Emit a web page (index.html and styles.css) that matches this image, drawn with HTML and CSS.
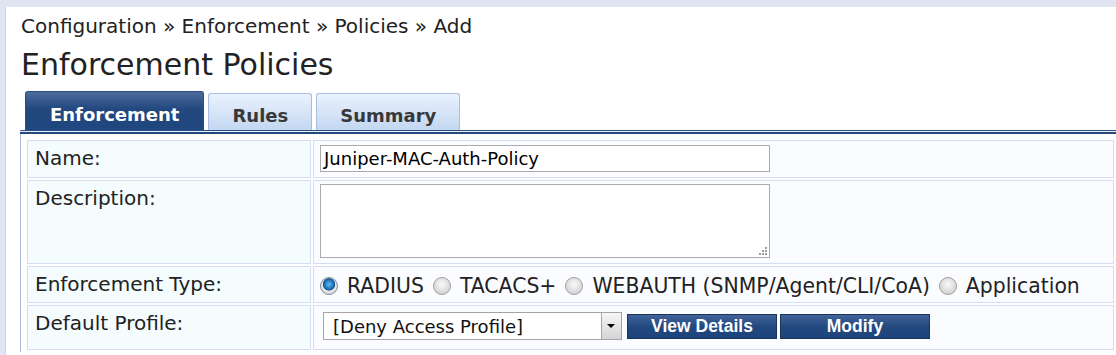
FILE: index.html
```html
<!DOCTYPE html>
<html lang="en">
<head>
  <meta charset="UTF-8" />
  <title>Enforcement Policies</title>
  <link rel="stylesheet" href="styles.css">
</head>
<body>
  <div class="page">
    <div class="crumbs">Configuration &raquo; Enforcement &raquo; Policies &raquo; Add</div>
    <h1>Enforcement Policies</h1>

    <div class="tabs">
      <div class="tab active">Enforcement</div>
      <div class="tab">Rules</div>
      <div class="tab">Summary</div>
    </div>

    <div class="panel">
      <table class="form">
        <tr class="name">
          <td class="label">Name:</td>
          <td class="value"><div class="input">Juniper-MAC-Auth-Policy</div></td>
        </tr>
        <tr class="desc">
          <td class="label">Description:</td>
          <td class="value">
            <div class="textarea">
              <svg class="grip" width="9" height="9" viewBox="0 0 9 9">
                <rect x="7" y="1" width="2" height="2" fill="#999"/>
                <rect x="4" y="4" width="2" height="2" fill="#999"/>
                <rect x="7" y="4" width="2" height="2" fill="#999"/>
                <rect x="1" y="7" width="2" height="2" fill="#999"/>
                <rect x="4" y="7" width="2" height="2" fill="#999"/>
                <rect x="7" y="7" width="2" height="2" fill="#999"/>
              </svg>
            </div>
          </td>
        </tr>
        <tr class="type">
          <td class="label">Enforcement Type:</td>
          <td class="value">
            <div class="radios">
              <span class="radio checked"></span><span class="opt">RADIUS</span>
              <span class="radio"></span><span class="opt">TACACS+</span>
              <span class="radio"></span><span class="opt">WEBAUTH (SNMP/Agent/CLI/CoA)</span>
              <span class="radio"></span><span class="opt">Application</span>
            </div>
          </td>
        </tr>
        <tr class="profile">
          <td class="label">Default Profile:</td>
          <td class="value">
            <div class="controls">
              <div class="select">
                <span class="select-text">[Deny Access Profile]</span>
                <span class="arrow"></span>
              </div>
              <div class="btn view">View Details</div>
              <div class="btn">Modify</div>
            </div>
          </td>
        </tr>
      </table>
    </div>
  </div>
</body>
</html>
```

FILE: styles.css
```css
body {
  margin: 0;
  padding: 7px 0 0 5px;
  background: #dfe6f2;
  font-family: 'DejaVu Sans', Verdana, sans-serif;
  color: #222;
  overflow: hidden;
}

.page {
  background: #fff;
  border-left: 1px solid #c9d5ea;
  min-height: 348px;
  padding: 7px 0 0 14px;
}

.crumbs {
  font-size: 20px;
  line-height: 24px;
  padding-left: 1px;
}

h1 {
  margin: 9px 0 0;
  padding-left: 1px;
  font-size: 30px;
  font-weight: normal;
  line-height: 36px;
}

.tabs {
  display: flex;
  gap: 4px;
  margin-top: 9px;
  padding-left: 5px;
  height: 38px;
  align-items: flex-end;
}

.tab {
  height: 21px;
  padding: 11px 23px 4px;
  border: 1px solid #a9bde0;
  border-bottom: none;
  border-radius: 3px 3px 0 0;
  background: linear-gradient(#eaf2fd, #c3d7f1);
  font-size: 18px;
  font-weight: bold;
  line-height: 22px;
  color: #383838;
}

.tab.active {
  height: 22px;
  padding: 12px 24px 4px;
  border-color: #2b4f83;
  background: linear-gradient(#4b6b9b, #22487f 45%, #1f467e);
  color: #fff;
}

.panel {
  position: relative;
  border-top: 1px solid #2b5088;
  border-left: 1px solid #aabbd8;
  padding: 7px 0 0 4px;
}

.panel::before {
  content: "";
  position: absolute;
  left: -1px;
  right: 0;
  top: 0;
  height: 2px;
  background: #23497f;
  border-top: 1px solid #e8eef8;
}

.form {
  width: 100%;
  border-collapse: separate;
  border-spacing: 2px;
  font-size: 20px;
}

.form td {
  border: 1px solid #d3def4;
  vertical-align: top;
}

.label {
  width: 266px;
  background: #f4fcfe;
  padding: 5px 9px 0 7px;
  color: #222;
}

.value {
  background: #fbfcff;
  padding: 4px 6px 0;
}

.name .label { height: 31px; }
.desc .label { height: 77px; }
.type .label { height: 30px; }
.profile .label { height: 38px; }

.input {
  width: 442px;
  height: 25px;
  border: 1px solid #ababab;
  background: #fff;
  padding: 0 3px;
  font-size: 18px;
  line-height: 26px;
  color: #000;
}

.desc .value {
  padding-top: 3px;
}

.textarea {
  position: relative;
  width: 448px;
  height: 72px;
  border: 1px solid #ababab;
  background: #fff;
}

.grip {
  position: absolute;
  right: 2px;
  bottom: 2px;
}

.type .value {
  vertical-align: middle;
  padding-top: 0;
}

.radios {
  display: flex;
  align-items: center;
  padding-top: 2px;
  font-size: 20.4px;
}

.radio {
  width: 16px;
  height: 16px;
  border-radius: 50%;
  border: 1px solid #a0a0a0;
  background: radial-gradient(circle at 50% 40%, #fafafa, #d6d6d6 70%, #bdbdbd);
  margin-right: 9px;
}

.radio.checked {
  border-color: #7f8c99;
  background: radial-gradient(circle at 50% 40%, #6cb8ec 0, #1b74bd 36%, #0d4f87 46%, #e8e8e8 52%, #c9c9c9 100%);
}

.opt {
  margin-right: 9px;
  color: #222;
}

.profile .value {
  padding: 6px 6px 0 9px;
}

.controls {
  display: flex;
  align-items: center;
  gap: 3px;
}

.select {
  display: flex;
  width: 297px;
  height: 26px;
  border: 1px solid #a5a5a5;
  background: #fff;
  margin-right: 2px;
}

.select-text {
  flex: 1;
  padding-left: 9px;
  font-size: 18px;
  line-height: 28px;
  color: #111;
}

.arrow {
  position: relative;
  width: 19px;
  border-left: 1px solid #a5a5a5;
  background: linear-gradient(#f6f6f6, #d4d4d4);
}

.arrow::after {
  content: "";
  position: absolute;
  left: 5px;
  top: 11px;
  border-left: 4px solid transparent;
  border-right: 4px solid transparent;
  border-top: 4px solid #000;
}

.btn {
  width: 148px;
  height: 23px;
  border: 1px solid #1a355c;
  background: linear-gradient(#41639a, #23497f 50%, #1c447c);
  color: #fff;
  font-family: 'Liberation Sans', Arial, sans-serif;
  font-weight: bold;
  font-size: 17.5px;
  line-height: 22px;
  text-align: center;
}
```
